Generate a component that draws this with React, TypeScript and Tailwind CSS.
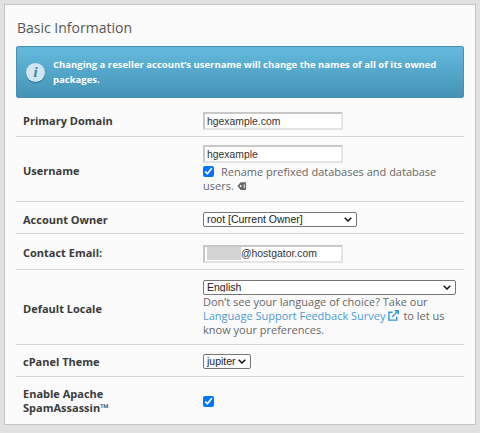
import * as React from "react";

const inputCls =
  "block h-[18px] w-[140px] border-2 border-[#e4e4e4] border-t-[#c8c8c8] border-l-[#c8c8c8] bg-white px-[2px] font-['Liberation_Sans',sans-serif] text-[10.4px] text-[#333] outline-none";

function Select({ value, className }: { value: string; className: string }) {
  return (
    <div className={`relative ${className}`}>
      <select className="block h-[15px] w-full appearance-none rounded-[2px] border border-[#767676] bg-white pl-[3px] font-['Liberation_Sans',sans-serif] text-[10.5px] leading-none text-[#222]">
        <option>{value}</option>
      </select>
      <svg viewBox="0 0 8 5" fill="none" stroke="#111" strokeWidth="1.5" className="pointer-events-none absolute right-[5px] top-[5px] h-[5px] w-[8px]">
        <path d="M0.7 0.7 L4 4 L7.3 0.7" />
      </svg>
    </div>
  );
}

function Row({ label, className, children }: { label: React.ReactNode; className: string; children: React.ReactNode }) {
  return (
    <div className={`flex items-center border-b-[1.5px] border-[#d4d4d4] last:border-b-0 ${className}`}>
      <div className="w-[187px] shrink-0 pl-[7px] pr-8 text-[11px] font-bold leading-[14.5px] text-[#3a3a3a]">{label}</div>
      <div className="min-w-0 flex-1 pr-[6px]">{children}</div>
    </div>
  );
}

export default function App() {
  const [renameDb, setRenameDb] = React.useState(true);
  const [spam, setSpam] = React.useState(true);

  return (
    <div className="h-[433px] w-[480px] overflow-hidden bg-[#e1e1e1] pl-1 pr-[4px] pt-1 font-['Open_Sans',sans-serif]">
      <div className="h-[421px] border border-[#c4c4c4] bg-[#fbfbfb] pl-[11px] pr-[11px]">
        <h2 className="mt-[9px] pl-[1px] text-[14px] leading-[27px] text-[#555]">Basic Information</h2>

        <div className="mt-[5px] flex h-[52px] items-start rounded-[2px] border border-[#4a92b2] bg-gradient-to-b from-[#64bade] to-[#4494b6] pl-[9px] pr-2 pt-[11px]">
          <div className="mt-[5px] flex h-[19px] w-[19px] shrink-0 items-center justify-center rounded-full bg-[#cfe6f0] font-['Liberation_Serif',serif] text-[15px] font-bold italic text-[#44809c] shadow-[0_1px_1px_rgba(0,0,0,0.35)]">
            i
          </div>
          <p className="ml-[8px] text-[9.5px] font-bold leading-[14.5px] text-white">
            Changing a reseller account’s username will change the names of all of its owned packages.
          </p>
        </div>

        <div className="mt-[4px]">
          <Row label="Primary Domain" className="h-[35px] pt-[4px]">
            <input readOnly value="hgexample.com" className={inputCls} />
          </Row>
          <Row label={<span className="relative top-[2px]">Username</span>} className="h-[65px]">
            <input readOnly value="hgexample" className={inputCls} />
            <div className="mt-[2px] text-[11px] leading-[14px] text-[#666]">
              <input
                type="checkbox"
                checked={renameDb}
                onChange={(e) => setRenameDb(e.currentTarget.checked)}
                className="mr-[7px] mt-[1px] inline-block h-[11px] w-[11px] align-[-1px]"
              />
              Rename prefixed databases and database users.{" "}
              <svg viewBox="0 0 11 10" className="inline-block h-[10px] w-[10px] align-[-1px]">
                <path d="M0.5 5 L4 1 H10 V9.5 H4 Z" fill="#666" />
                <circle cx="4" cy="5" r="1" fill="#fbfbfb" />
                <path d="M8 3 V7.5" stroke="#fbfbfb" strokeWidth="1" />
              </svg>
            </div>
          </Row>
          <Row label={<span className="relative top-[1px]">Account Owner</span>} className="h-[32px] pt-[4px]">
            <Select value="root [Current Owner]" className="w-[154px]" />
          </Row>
          <Row label="Contact Email:" className="h-[36px] pt-[4px]">
            <div className={`${inputCls} flex items-center`}>
              <span className="h-[13px] w-[34px] bg-[#d4d4d4]" />
              <span>@hostgator.com</span>
            </div>
          </Row>
          <Row label={<span className="relative top-[1px]">Default Locale</span>} className="h-[75px] pt-[2px]">
            <Select value="English" className="w-[253px]" />
            <p className="text-[11px] leading-[14px] text-[#666]">
              Don’t see your language of choice? Take our{" "}
              <a href="#" className="text-[#4a9bd4]">
                Language Support Feedback Survey
              </a>
              <svg viewBox="0 0 12 12" fill="none" stroke="#2f93d8" strokeWidth="1.5" className="ml-[2px] mr-[2px] inline-block h-[11px] w-[11px] align-[-1px]">
                <path d="M9.5 7 V11 H1 V2.5 H5" />
                <path d="M4.5 7.5 L11 1 M7.5 0.8 H11.2 V4.5" />
              </svg>{" "}
              to let us know your preferences.
            </p>
          </Row>
          <Row label={<span className="relative top-[1px]">cPanel Theme</span>} className="h-[32px] pt-[2px]">
            <Select value="jupiter" className="w-[48px]" />
          </Row>
          <Row label="Enable Apache SpamAssassin™" className="h-[48px]">
            <input
              type="checkbox"
              checked={spam}
              onChange={(e) => setSpam(e.currentTarget.checked)}
              className="block h-[11px] w-[11px]"
            />
          </Row>
        </div>
      </div>
    </div>
  );
}
